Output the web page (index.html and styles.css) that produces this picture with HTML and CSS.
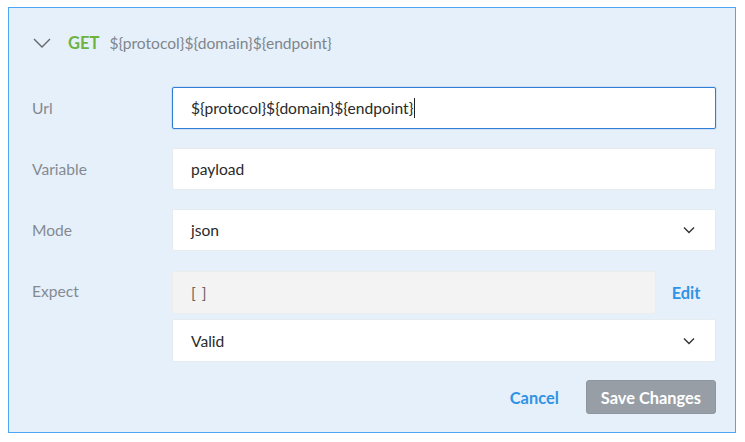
FILE: index.html
```html
<!DOCTYPE html>
<html>
<head>
<meta charset="utf-8">
<link rel="stylesheet" href="styles.css">
</head>
<body>
<div class="panel">
  <div class="header">
    <svg class="chev" width="18" height="10" viewBox="0 0 18 10"><path d="M1 1 L9 9 L17 1" fill="none" stroke="#666" stroke-width="1.4"/></svg>
    <span class="method">GET</span>
    <span class="url">${protocol}${domain}${endpoint}</span>
  </div>
  <div class="rows">
    <div class="row">
      <div class="label">Url</div>
      <div class="field focused">${protocol}${domain}${endpoint}<span class="caret"></span></div>
    </div>
    <div class="row">
      <div class="label">Variable</div>
      <div class="field">payload</div>
    </div>
    <div class="row">
      <div class="label">Mode</div>
      <div class="field select">json<svg class="dd" width="12" height="8" viewBox="0 0 12 8"><path d="M1 1.5 L6 6.5 L11 1.5" fill="none" stroke="#333" stroke-width="1.4"/></svg></div>
    </div>
    <div class="row expect">
      <div class="label">Expect</div>
      <div class="stack">
        <div class="line">
          <div class="field gray">[ ]</div>
          <a class="link edit">Edit</a>
        </div>
        <div class="field select">Valid<svg class="dd" width="12" height="8" viewBox="0 0 12 8"><path d="M1 1.5 L6 6.5 L11 1.5" fill="none" stroke="#333" stroke-width="1.4"/></svg></div>
      </div>
    </div>
  </div>
  <div class="actions">
    <a class="link">Cancel</a>
    <button class="save">Save Changes</button>
  </div>
</div>
</body>
</html>
```
FILE: styles.css
```css
* { box-sizing: border-box; }
body {
  margin: 0;
  padding: 7px 9px 0 8px;
  background: #fff;
  font-family: Lato, "Open Sans", sans-serif;
  font-size: 15.6px;
}
.panel {
  width: 728px;
  height: 426px;
  background: #e6f0fb;
  border: 1px solid #4ea4f6;
  padding: 0 19px 0 23px;
}
.header {
  display: flex;
  align-items: center;
  height: 69px;
}
.chev { margin-left: 1px; margin-top: 1px; }
.method {
  color: #6cb33f;
  font-weight: 700;
  font-size: 16.5px;
  margin-left: 17px;
}
.url {
  color: #80868c;
  margin-left: 10px;
}
.rows { display: flex; flex-direction: column; gap: 19px; margin-top: 10px; }
.row { display: flex; align-items: center; }
.row.expect { align-items: flex-start; margin-top: 1px; }
.row.expect .label { margin-top: 11px; }
.label {
  width: 140px;
  flex: none;
  color: #858a90;
}
.field {
  flex: 1;
  height: 42px;
  background: #fff;
  border: 1px solid #e6ebf0;
  border-radius: 2px;
  display: flex;
  align-items: center;
  padding: 0 18px;
  color: #2a2a2a;
}
.field.focused {
  border: 1px solid #2f7fd6;
  box-shadow: 0 0 0 1px #cfe0f5;
}
.caret {
  display: inline-block;
  width: 1px;
  height: 20px;
  background: #222;
  margin-left: 1px;
}
.select { justify-content: space-between; }
.dd { margin-right: 2px; }
.stack { flex: 1; display: flex; flex-direction: column; gap: 5px; }
.stack > .field { flex: none; height: 43px; }
.line { display: flex; align-items: center; }
.field.gray {
  height: 43px;
  background: #f3f3f3;
  border-color: #ececec;
  color: #666;
  letter-spacing: 1px;
}
.link {
  color: #2f93e6;
  font-weight: 700;
  font-size: 16.4px;
  cursor: pointer;
}
.edit { width: 60px; flex: none; text-align: center; }
.actions {
  display: flex;
  justify-content: flex-end;
  align-items: center;
  margin-top: 18px;
  gap: 27px;
}
.save {
  height: 34px;
  padding: 0 14px;
  background: #979ea6;
  color: #fff;
  border: 1px solid #8e959d;
  border-radius: 3px;
  font-family: inherit;
  font-weight: 700;
  font-size: 16.4px;
}
```
